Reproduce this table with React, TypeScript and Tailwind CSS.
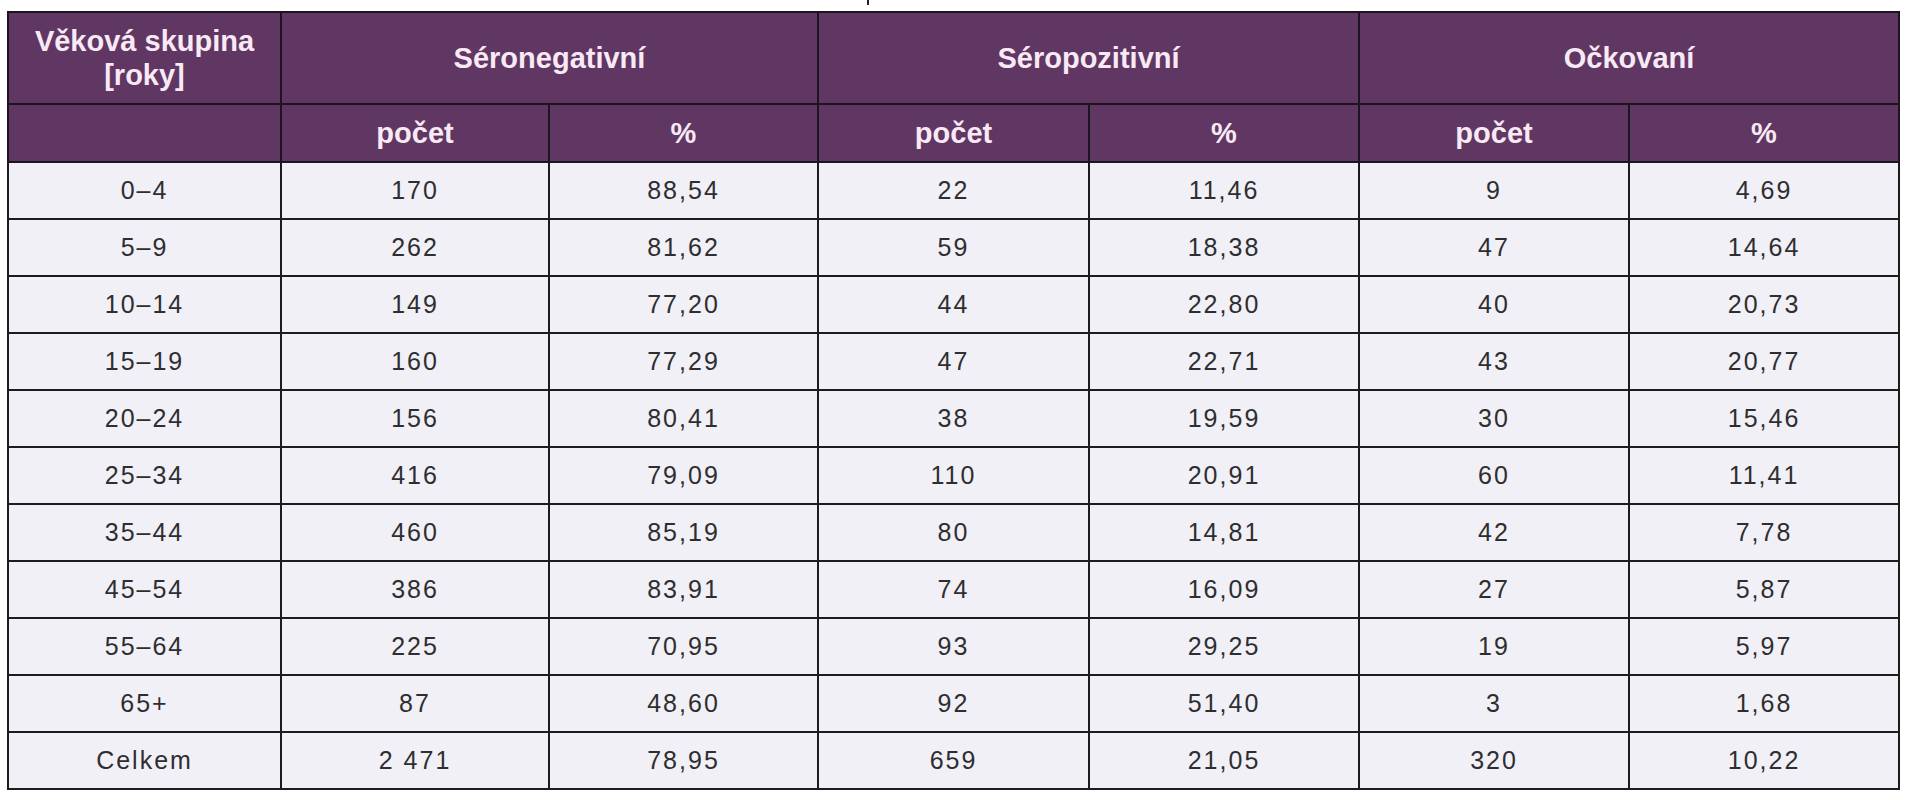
import React from "react";

const rows: string[][] = [
  ["0–4", "170", "88,54", "22", "11,46", "9", "4,69"],
  ["5–9", "262", "81,62", "59", "18,38", "47", "14,64"],
  ["10–14", "149", "77,20", "44", "22,80", "40", "20,73"],
  ["15–19", "160", "77,29", "47", "22,71", "43", "20,77"],
  ["20–24", "156", "80,41", "38", "19,59", "30", "15,46"],
  ["25–34", "416", "79,09", "110", "20,91", "60", "11,41"],
  ["35–44", "460", "85,19", "80", "14,81", "42", "7,78"],
  ["45–54", "386", "83,91", "74", "16,09", "27", "5,87"],
  ["55–64", "225", "70,95", "93", "29,25", "19", "5,97"],
  ["65+", "87", "48,60", "92", "51,40", "3", "1,68"],
  ["Celkem", "2 471", "78,95", "659", "21,05", "320", "10,22"],
];

const th =
  "border-2 border-[#1c141e] bg-[#603763] text-[#f8e9f5] font-bold text-[29px] leading-[34px] text-center align-middle p-0";
const td =
  "border-2 border-[#1c1c1e] bg-[#f1f0f6] text-[#2e2e30] text-[25px] tracking-[2px] text-center align-middle p-0";

export default function App() {
  return (
    <div className="w-[1911px] h-[800px] bg-white font-['Liberation_Sans',Arial,sans-serif]">
      <div className="h-[11px] flex items-start">
        <div className="ml-[867px] w-[2px] h-[5px] bg-[#222]" />
      </div>
      <table className="ml-[7px] w-[1891px] table-fixed border-collapse">
        <colgroup>
          <col className="w-[273px]" />
          <col className="w-[268px]" />
          <col className="w-[269px]" />
          <col className="w-[271px]" />
          <col className="w-[270px]" />
          <col className="w-[270px]" />
          <col className="w-[270px]" />
        </colgroup>
        <thead>
          <tr className="h-[92px]">
            <th className={th}>
              Věková skupina
              <br />
              [roky]
            </th>
            <th className={th} colSpan={2}>
              Séronegativní
            </th>
            <th className={th} colSpan={2}>
              Séropozitivní
            </th>
            <th className={th} colSpan={2}>
              Očkovaní
            </th>
          </tr>
          <tr className="h-[58px]">
            <th className={th}></th>
            <th className={th}>počet</th>
            <th className={th}>%</th>
            <th className={th}>počet</th>
            <th className={th}>%</th>
            <th className={th}>počet</th>
            <th className={th}>%</th>
          </tr>
        </thead>
        <tbody>
          {rows.map((r, i) => (
            <tr key={i} className="h-[57px]">
              {r.map((c, j) => (
                <td key={j} className={td}>
                  {c}
                </td>
              ))}
            </tr>
          ))}
        </tbody>
      </table>
    </div>
  );
}
